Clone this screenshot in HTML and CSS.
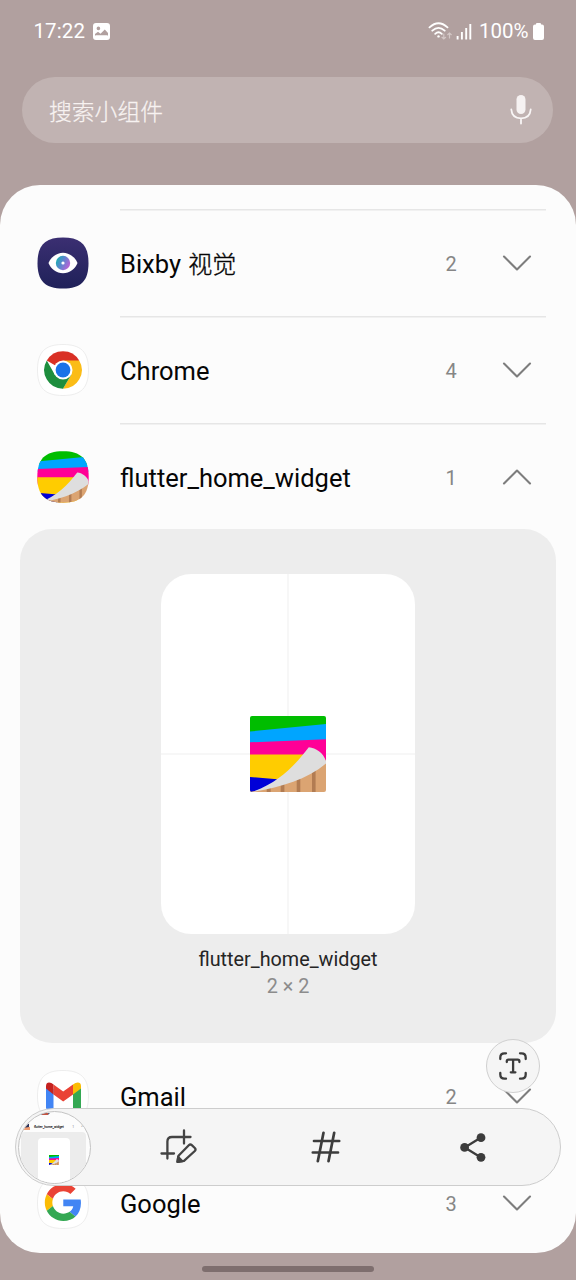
FILE: index.html
```
<!DOCTYPE html>
<html lang="zh-CN">
<head>
<meta charset="utf-8">
<title>小组件</title>
<link rel="stylesheet" href="styles.css">
</head>
<body>
<svg class="defs" width="0" height="0" aria-hidden="true">
  <defs>
    <linearGradient id="night" x1="0" y1="0" x2="0" y2="1"><stop offset="0" stop-color="#3b2f72"/><stop offset="1" stop-color="#1f2159"/></linearGradient>
    <linearGradient id="iris" x1="0" y1="0.2" x2="1" y2="0.7"><stop offset="0" stop-color="#12b3ae"/><stop offset="0.45" stop-color="#5c86cf"/><stop offset="1" stop-color="#c25fd6"/></linearGradient>
    <clipPath id="squircle"><path d="M26 .3C44 .3 51.7 8 51.7 26S44 51.7 26 51.7S.3 44 .3 26S8 .3 26 .3Z"/></clipPath>
    <clipPath id="art-edge"><rect width="76" height="76" rx="2"/></clipPath>
    <symbol id="art" viewBox="0 0 76 76">
      <path fill="#00bd00" d="M0 0H76V20H0Z"/>
      <path fill="#00a5ff" d="M0 15.5L76 8V30H0Z"/>
      <path fill="#ff0096" d="M0 26.3L76 23.3V50H0Z"/>
      <path fill="#fc0" d="M0 38.5H60V76H0Z"/>
      <path fill="#0000d8" d="M0 61L30 63.6V76H0Z"/>
      <path fill="#dba472" d="M0 76C32 70 54 62 76 44V76Z"/>
      <path fill="#b27c52" d="M16.7 70H20.7V76H16.7ZM30.7 66H34.4V76H30.7ZM46.7 60H50.3V76H46.7ZM62 52H65.6V76H62Z"/>
      <path fill="#dedede" d="M2 76C30 66 45 49 58.8 31.3C66 32 73 36.5 76 45V47.5C56 64 31 71 2 76Z"/>
    </symbol>
    <symbol id="down" viewBox="0 0 30 16"><path d="M2 1.6L15 14.4L28 1.6" fill="none" stroke="#7d7d7d" stroke-width="2.1" stroke-linecap="round" stroke-linejoin="round"/></symbol>
    <symbol id="up" viewBox="0 0 30 16"><path d="M2 14.4L15 1.6L28 14.4" fill="none" stroke="#7d7d7d" stroke-width="2.1" stroke-linecap="round" stroke-linejoin="round"/></symbol>
    <symbol id="tile" viewBox="0 0 52 52"><path d="M26 .5C44 .5 51.5 8 51.5 26S44 51.5 26 51.5S.5 44 .5 26S8 .5 26 .5Z" fill="#fff" stroke="#ebebeb" stroke-width=".9"/></symbol>
  </defs>
</svg>
<div class="phone">
  <header class="status">
    <span class="clock">17:22</span>
    <svg class="photo" viewBox="0 0 17 17"><path fill="#fff" fill-rule="evenodd" d="M3 0H14Q17 0 17 3V14Q17 17 14 17H3Q0 17 0 14V3Q0 0 3 0ZM5.4 3.6A1.8 1.8 0 1 0 5.4 7.2A1.8 1.8 0 1 0 5.4 3.6ZM2 13V11L5 8.7L7.5 10.8L11.8 6.5L15 10V13Q15 12.3 14 12.3H3Q2 12.3 2 13Z"/></svg>
    <span class="spacer"></span>
    <svg class="wifi" viewBox="0 0 25 18" fill="none" stroke="#fff" stroke-width="1.8" stroke-linecap="round"><path d="M1.5 5.4Q10.5 -2.8 19.5 5.4M4.3 8.7Q10.5 3 16.7 8.7M7.2 11.8Q10.5 8.8 13.8 11.8"/><circle cx="10.5" cy="14.4" r="1.2" fill="#fff" stroke="none"/><path stroke="#d4c8c7" stroke-width="1.2" d="M15.8 12V17M14 15.3L15.8 17L17.6 15.3M21.5 16V11M19.7 12.7L21.5 11L23.3 12.7"/></svg>
    <svg class="signal" viewBox="0 0 16 17" fill="none" stroke="#fff" stroke-width="1.9"><path d="M1.6 13V16.5M5.9 9V16.5M10.2 5V16.5M14.3 1V16.5"/></svg>
    <span class="percent">100%</span>
    <svg class="battery" viewBox="0 0 11 17"><path fill="#fff" d="M3 1Q3 0 4 0H7Q8 0 8 1V1.6H9Q11 1.6 11 3.6V15Q11 17 9 17H2Q0 17 0 15V3.6Q0 1.6 2 1.6H3Z"/></svg>
  </header>
  <div class="search">
    <span class="hint">搜索小组件</span>
    <svg class="mic" viewBox="0 0 22 30"><rect x="6.5" y="0" width="9" height="19" rx="4.5" fill="#f6f2f2"/><path d="M1.3 14.5Q2 23.3 11 23.3T20.7 14.5M11 23.3V28.5" fill="none" stroke="#f9f6f6" stroke-width="1.8" stroke-linecap="round"/></svg>
  </div>
  <main class="sheet">
    <div class="row ruled">
      <svg class="icon" viewBox="0 0 52 52"><path d="M26 .5C44 .5 51.5 8 51.5 26S44 51.5 26 51.5S.5 44 .5 26S8 .5 26 .5Z" fill="url(#night)"/><path d="M11.5 26C13.5 20.5 19.5 15.7 26 15.7S38.5 20.5 40.5 26C38.5 31.5 32.5 36.3 26 36.3S13.5 31.5 11.5 26Z" fill="#fff"/><circle cx="26" cy="26" r="7.2" fill="url(#iris)"/><circle cx="26" cy="26" r="1.6" fill="#fff"/></svg>
      <span class="name">Bixby <span class="han">视觉</span></span><span class="count">2</span><svg class="arrow"><use href="#down"/></svg>
    </div>
    <div class="row ruled">
      <svg class="icon" viewBox="0 0 52 52"><use href="#tile"/><path fill="#d93025" d="M26 26L9.8 16.5A18.7 18.7 0 0 1 42.2 16.5Z"/><path fill="#fbbc16" d="M26 16.5H42.2A18.7 18.7 0 0 1 26 44.7L34.2 30.7Z"/><path fill="#1e8e3e" d="M9.8 16.5A18.7 18.7 0 0 0 26 44.7L34.2 30.7H17.8Z"/><circle cx="26" cy="26" r="9.5" fill="#fff"/><circle cx="26" cy="26" r="7.4" fill="#1a73e8"/></svg>
      <span class="name">Chrome</span><span class="count">4</span><svg class="arrow"><use href="#down"/></svg>
    </div>
    <div class="row ruled">
      <svg class="icon" viewBox="0 0 52 52"><g clip-path="url(#squircle)"><use href="#art" width="52" height="52"/></g></svg>
      <span class="name">flutter_home_widget</span><span class="count">1</span><svg class="arrow"><use href="#up"/></svg>
    </div>
    <section class="panel">
      <div class="preview"><svg class="art" viewBox="0 0 76 76"><g clip-path="url(#art-edge)"><use href="#art" width="76" height="76"/></g></svg></div>
      <div class="title">flutter_home_widget</div>
      <div class="size">2 × 2</div>
    </section>
    <div class="row">
      <svg class="icon" viewBox="0 0 52 52"><use href="#tile"/><path fill="#4285f4" d="M9 16L16.5 19V40H11Q9 40 9 37.5Z"/><path fill="#34a853" d="M36 19L44 16V37.5Q44 40 42 40H36Z"/><path fill="#ea4335" d="M16.5 14.5L26.2 21.5L36 14.5V24.5L26.2 31.5L16.5 24.5Z"/><path fill="#c5221f" d="M9 16C9 11.5 13.5 11.5 16.5 14.5V24.5L9 18.5Z"/><path fill="#fbbc04" d="M44 16C44 11.5 39.5 11.5 36 14.5V24.5L44 18.5Z"/></svg>
      <span class="name">Gmail</span><span class="count">2</span><svg class="arrow"><use href="#down"/></svg>
    </div>
    <div class="row">
      <svg class="icon" viewBox="0 0 52 52"><use href="#tile"/><g transform="translate(7.8 7) scale(.77)"><path fill="#ea4335" d="M24 9.5c3.54 0 6.71 1.22 9.21 3.6l6.85-6.85C35.9 2.38 30.47 0 24 0 14.62 0 6.51 5.38 2.56 13.22l7.98 6.19C12.43 13.72 17.74 9.5 24 9.5z"/><path fill="#4285f4" d="M46.98 24.55c0-1.57-.15-3.09-.38-4.55H24v9.02h12.94c-.58 2.96-2.26 5.48-4.78 7.18l7.73 6c4.51-4.18 7.09-10.36 7.09-17.65z"/><path fill="#fbbc05" d="M10.53 28.59c-.48-1.45-.76-2.99-.76-4.59s.27-3.14.76-4.59l-7.98-6.19C.92 16.46 0 20.12 0 24s.92 7.54 2.56 10.78l7.97-6.19z"/><path fill="#34a853" d="M24 48c6.48 0 11.93-2.13 15.89-5.81l-7.73-6c-2.15 1.45-4.92 2.3-8.16 2.3-6.26 0-11.57-4.22-13.47-9.91l-7.98 6.19C6.51 42.62 14.62 48 24 48z"/></g></svg>
      <span class="name">Google</span><span class="count">3</span><svg class="arrow"><use href="#down"/></svg>
    </div>
  </main>
  <div class="handle"></div>

  <div class="extract">
    <svg viewBox="0 0 28 28" fill="none" stroke="#3c3c3c" stroke-width="2.3" stroke-linecap="round" stroke-linejoin="round"><path d="M1.3 7V5.5Q1.3 1.3 5.5 1.3H7M21 1.3H22.5Q26.7 1.3 26.7 5.5V7M26.7 21V22.5Q26.7 26.7 22.5 26.7H21M7 26.7H5.5Q1.3 26.7 1.3 22.5V21"/><path d="M7.8 10V9.3Q7.8 7.7 9.4 7.7H18.8Q20.4 7.7 20.4 9.3V10M14.1 8V20.2M11.8 20.3H16.4"/></svg>
  </div>
  <div class="toolbar">
    <div class="thumb">
      <div class="thumb-top"><svg viewBox="0 0 14 3"><path fill="#5b6078" d="M0 0H14L12 2H3Z"/><path fill="#c45543" d="M6 0H12V2H6Z"/></svg></div>
      <div class="thumb-row"><svg class="thumb-icon" viewBox="0 0 7 7"><path fill="#ef9b70" d="M1 3L7 4V7H1Z"/><path fill="#2b3159" d="M3 0L6 1V4L0 5L2 3Z"/></svg><span class="thumb-name">flutter_home_widget</span><span class="thumb-dots">1</span><span class="thumb-dots">^</span></div>
      <div class="thumb-panel"><div class="thumb-card"><svg viewBox="0 0 76 76"><use href="#art"/></svg></div></div>
    </div>
    <div class="tool"><svg class="crop" viewBox="0 0 38 36" fill="none" stroke="#434343" stroke-width="2.3" stroke-linecap="round" stroke-linejoin="round"><path d="M7.4 29.5V12.5Q7.4 8 12 8H30.5M24 1.5V14.5M1.5 24.5H14"/><path d="M17.5 32.8L18.5 26.7L28.8 16.3Q30.3 14.8 31.8 16.2L34.8 19Q36.3 20.5 34.8 22L24 31.8Z"/><path d="M17.5 32.8L18.2 28L22.4 32.2Z" fill="#434343"/></svg></div>
    <div class="tool"><svg class="hash" viewBox="0 0 30 32" fill="none" stroke="#3c3c3c" stroke-width="2.7" stroke-linecap="round"><path d="M12.5 1.8L6.8 30.2M23.2 1.8L17.5 30.2M3 10H28.2M1.8 21.5H27"/></svg></div>
    <div class="tool"><svg class="share" viewBox="0 0 26 29" fill="#3c3c3c" stroke="#3c3c3c"><path d="M21 4.5L4.7 14.4L21 24.5" fill="none" stroke-width="2.3"/><g stroke="none"><circle cx="21" cy="4.7" r="4.4"/><circle cx="4.6" cy="14.4" r="4.4"/><circle cx="21" cy="24.3" r="4.4"/></g></svg></div>
  </div>
</div>
</body>
</html>
```

FILE: styles.css
```
* { box-sizing: border-box; }
body { margin: 0; background: #b1a09f; font-family: Roboto, "Noto Sans CJK SC", sans-serif; }
svg { display: block; flex: none; }
.defs { position: absolute; }
.phone { position: relative; width: 576px; height: 1280px; overflow: hidden; display: flex; flex-direction: column; background: #b1a09f; }

.status { flex: none; height: 77px; display: flex; align-items: flex-start; padding: 19px 32.5px 0 33.5px; color: #fff; font-size: 20.5px; line-height: 25px; }
.clock { letter-spacing: .1px; }
.photo { width: 17px; height: 17px; margin: 4px 0 0 8px; }
.spacer { flex: 1; }
.wifi { width: 25px; height: 18px; margin: 3px 3px 0 0; }
.signal { width: 16px; height: 17px; margin: 4px 7px 0 0; }
.battery { width: 11px; height: 17px; margin: 4px 0 0 4px; }

.search { flex: none; height: 66px; margin: 0 23px 42px 22px; padding: 0 21px 0 27px; border-radius: 33px; background: #c1b3b2; display: flex; align-items: center; justify-content: space-between; }
.hint { color: #f7f2f1; font-size: 22.8px; line-height: 30px; font-weight: 300; padding-top: 6px; -webkit-text-stroke: .25px #f7f2f1; }
.mic { width: 22px; height: 30px; margin-top: -1px; }

.sheet { flex: none; height: 1068px; padding-top: 24.4px; border-radius: 40px; background: #fcfcfc; overflow: hidden; }
.row { height: 106.67px; padding: 0 44.5px 0 37px; display: flex; align-items: center; }
.ruled { padding-top: 1.4px; background: linear-gradient(#e6e6e6, #e6e6e6) 120px 0 / 426px 1.5px no-repeat; }
.icon { width: 52px; height: 52px; margin-right: 31px; }
.name { flex: 1; color: #060606; font-size: 25.5px; line-height: 32px; padding-top: 2px; }
.han { font-size: 24px; font-weight: 300; margin-left: 1px; -webkit-text-stroke: .35px #060606; }
.count { width: 12px; margin-right: 44.5px; color: #868686; font-size: 20px; line-height: 24px; text-align: center; padding-top: 2px; }
.arrow { width: 30px; height: 16px; }

.panel { height: 513.6px; margin: 0 20px; padding-top: 44.6px; border-radius: 32px; background: #ededed; display: flex; flex-direction: column; align-items: center; }
.preview { width: 254px; height: 360px; border-radius: 30px; display: flex; align-items: center; justify-content: center; background: linear-gradient(#f7f7f7, #f7f7f7) center / 2px 100% no-repeat, linear-gradient(#f7f7f7, #f7f7f7) center / 100% 2px no-repeat, #fff; }
.art { width: 76px; height: 76px; }
.title { margin-top: 12px; color: #252525; font-size: 19.8px; line-height: 27px; }
.size { color: #8c8c8c; font-size: 19.8px; line-height: 27px; }

.handle { flex: none; width: 172px; height: 6px; margin: 13px auto 0 202px; border-radius: 3px; background: #7e6e6e; }

.extract { position: absolute; left: 486px; top: 1039px; width: 54px; height: 54px; border: 1px solid #d0d0d0; border-radius: 50%; background: #f5f5f5; display: flex; align-items: center; justify-content: center; }
.extract svg { width: 28px; height: 28px; }
.toolbar { position: absolute; left: 15px; top: 1108px; width: 546px; height: 78px; border: 1px solid #cdcdcd; border-radius: 39px; background: #f5f5f5; display: grid; grid-template-columns: 89px 147px 147px 147px; align-items: center; }
.tool { display: flex; justify-content: center; }
.crop { width: 38px; height: 36px; }
.hash { width: 30px; height: 32px; }
.share { width: 26px; height: 29px; }

.thumb { width: 73px; height: 73px; margin-left: 2px; border: 1px solid #c4c4c4; border-radius: 50%; background: #fcfcfc; overflow: hidden; }
.thumb-top { height: 10px; padding: 1px 0 0 17px; }
.thumb-top svg { width: 14px; height: 3px; }
.thumb-row { height: 10px; display: flex; align-items: center; padding-left: 4px; font-size: 3.3px; line-height: 4px; color: #000; }
.thumb-icon { width: 7px; height: 7px; margin-right: 4px; }
.thumb-name { width: 39px; -webkit-text-stroke: .1px #222; }
.thumb-dots { width: 9px; color: #777; }
.thumb-panel { height: 52px; margin: 0 4px 0 2px; padding-top: 6px; border-radius: 4px; background: #ececec; }
.thumb-card { width: 32px; height: 45px; margin-left: 17px; border-radius: 4px; background: #fff; display: flex; align-items: center; justify-content: center; }
.thumb-card svg { width: 10px; height: 10px; }
```
